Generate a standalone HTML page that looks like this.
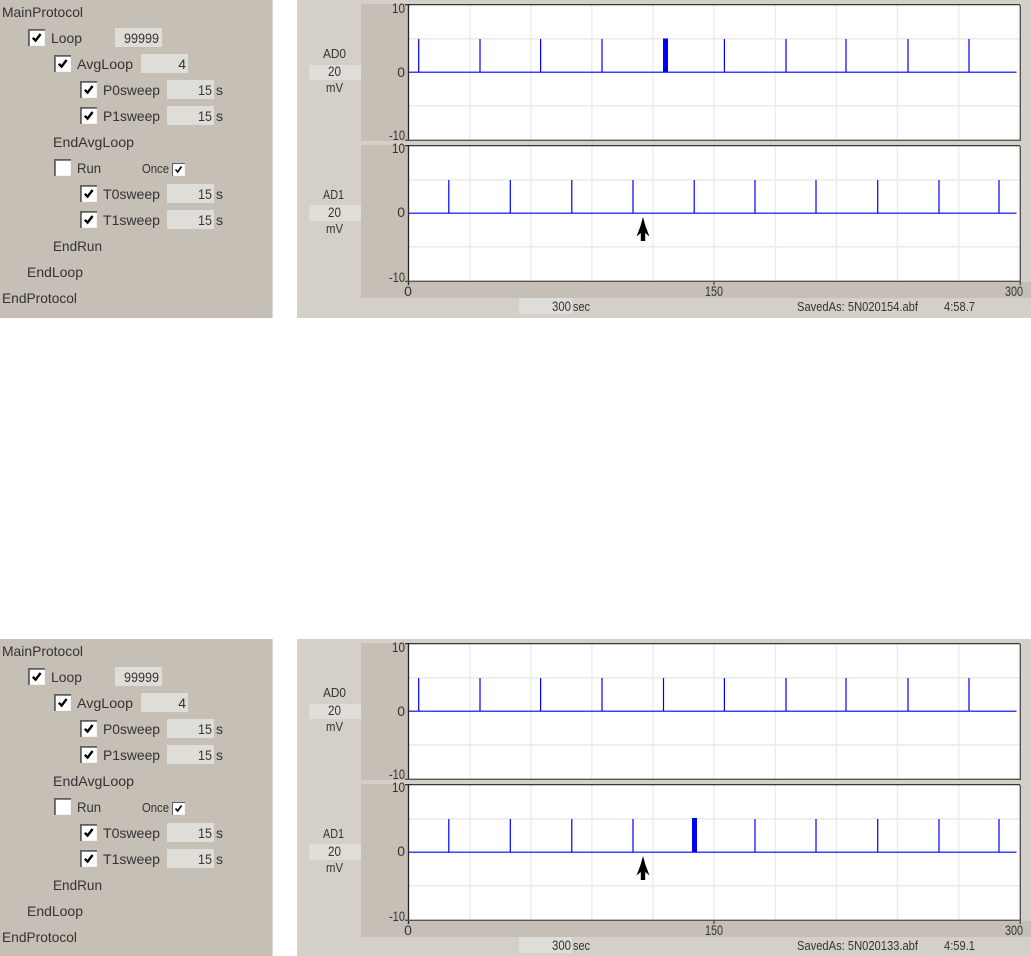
<!DOCTYPE html>
<html><head><meta charset="utf-8"><title>Protocol</title>
<style>
html,body{margin:0;padding:0;background:#fff;width:1031px;height:956px;overflow:hidden}
svg{display:block;position:absolute;left:0;top:0}
text{font-family:"Liberation Sans",sans-serif;font-size:14px;fill:#333}
.s{font-size:12.5px}
.d{font-size:14px}
.m{text-anchor:middle}
.e{text-anchor:end}
.g{fill:#ebebe9}
.b{fill:none;stroke:#00f;stroke-width:1.2}
</style></head><body>
<svg width="1031" height="956" viewBox="0 0 1031 956" xmlns="http://www.w3.org/2000/svg">
<defs>
<g id="cb"><rect x="0" y="0" width="17" height="17" fill="#f4f3f0"/><path d="M.9 17V.9H17" fill="none" stroke="#5f5f5f" stroke-width="1.8"/><rect x="2" y="2" width="14" height="14" fill="#fff"/><path d="M4.8 8.8L7.6 11.6L12.6 5" fill="none" stroke="#000" stroke-width="2.4"/></g>
<g id="cbe"><rect x="0" y="0" width="17" height="17" fill="#f4f3f0"/><path d="M.9 17V.9H17" fill="none" stroke="#5f5f5f" stroke-width="1.8"/><rect x="2" y="2" width="14" height="14" fill="#fff"/></g>
<g id="shell">
<rect x="0" y="0" width="272" height="318" fill="#c5bfb5"/>
<rect x="272" y="0" width="1" height="318" fill="#dcd9d2"/>
<rect x="297" y="0" width="734" height="318" fill="#d4d0c8"/>
<rect x="115" y="28" width="47" height="19" fill="#dfddd7"/>
<rect x="141" y="54" width="47" height="19" fill="#dfddd7"/>
<rect x="167" y="80" width="47" height="19" fill="#dfddd7"/>
<rect x="167" y="106" width="47" height="19" fill="#dfddd7"/>
<rect x="167" y="184" width="47" height="19" fill="#dfddd7"/>
<rect x="167" y="210" width="47" height="19" fill="#dfddd7"/>
<use href="#cb" x="28" y="29"/><use href="#cb" x="54" y="55"/><use href="#cb" x="80" y="81"/><use href="#cb" x="80" y="107"/>
<use href="#cbe" x="54" y="159"/><use href="#cb" x="80" y="185"/><use href="#cb" x="80" y="211"/>
<rect x="172" y="163" width="13" height="13" fill="#f4f3f0"/><path d="M172.5 176V163.5H185" fill="none" stroke="#5f5f5f"/><rect x="173.5" y="164.5" width="10.5" height="10.5" fill="#fff"/><path d="M175.5 169.5L177.7 172L181.5 166.5" fill="none" stroke="#000" stroke-width="1.6"/>
<rect x="361" y="4" width="47" height="137" fill="#c5bfb5"/>
<rect x="361" y="145" width="47" height="153" fill="#c5bfb5"/>
<rect x="408" y="282" width="623" height="16" fill="#c5bfb5"/>
<rect x="309" y="65" width="52" height="15" fill="#dfddd7"/>
<rect x="309" y="205" width="52" height="16" fill="#dfddd7"/>
<rect x="519" y="298" width="53" height="16" fill="#dfddd7"/>
<rect x="408" y="5" width="612" height="135" fill="#fff"/>
<rect x="408" y="146" width="612" height="135" fill="#fff"/>
<g class="g">
<rect x="408" y="38" width="612" height="1.6"/><rect x="408" y="105" width="612" height="1.6"/>
<rect x="408" y="179" width="612" height="1.6"/><rect x="408" y="246" width="612" height="1.6"/>
<rect x="469.2" y="5" width="1.4" height="135"/><rect x="530.2" y="5" width="1.4" height="135"/><rect x="591.2" y="5" width="1.4" height="135"/><rect x="652.2" y="5" width="1.4" height="135"/><rect x="713.2" y="5" width="1.4" height="135"/><rect x="774.7" y="5" width="1.4" height="135"/><rect x="835.7" y="5" width="1.4" height="135"/><rect x="896.7" y="5" width="1.4" height="135"/><rect x="958" y="5" width="1.4" height="135"/>
<rect x="469.2" y="146" width="1.4" height="135"/><rect x="530.2" y="146" width="1.4" height="135"/><rect x="591.2" y="146" width="1.4" height="135"/><rect x="652.2" y="146" width="1.4" height="135"/><rect x="713.2" y="146" width="1.4" height="135"/><rect x="774.7" y="146" width="1.4" height="135"/><rect x="835.7" y="146" width="1.4" height="135"/><rect x="896.7" y="146" width="1.4" height="135"/><rect x="958" y="146" width="1.4" height="135"/>
</g>
<path class="b" d="M408 72.2H1016.5M418.7 39V72M480 39V72M540.6 39V72M602 39V72M724.4 39V72M786 39V72M846 39V72M908 39V72M969 39V72"/>
<path class="b" d="M408 213.2H1016.5M448.8 180V213M510.3 180V213M571.8 180V213M633 180V213M755 180V213M816 180V213M877.7 180V213M939 180V213M999 180V213"/>
<path d="M405 4.7H1020" stroke="#222" stroke-width="1.2" fill="none"/>
<path d="M405 145.7H1020" stroke="#222" stroke-width="1.2" fill="none"/>
<path d="M408.5 4V140M408.5 145V281V285" stroke="#222" stroke-width="1.3" fill="none"/>
<path d="M405 140.3H1021M1020.3 5V141" stroke="#555" stroke-width="1.4" fill="none"/>
<path d="M405 281.3H1021M1020.3 146V285M714 281V285" stroke="#555" stroke-width="1.4" fill="none"/>
<path d="M643 217L640.5 226L636.5 236.5L640.8 233V241H645.2V233L649.5 236.5L645.5 226Z" fill="#000"/>
</g>
</defs>

<use href="#shell"/>
<use href="#shell" y="639"/>
<rect x="663" y="38.5" width="5" height="34" fill="#00f"/>
<rect x="692" y="818" width="5" height="34" fill="#00f"/>
<path class="b" d="M663.5 678V711"/>
<path class="b" d="M694.2 180V213"/>

<g>
<text x="2" y="17" textLength="81" lengthAdjust="spacingAndGlyphs">MainProtocol</text>
<text x="51" y="43" textLength="31" lengthAdjust="spacingAndGlyphs">Loop</text>
<text x="124" y="43" class="d" textLength="35" lengthAdjust="spacingAndGlyphs">99999</text>
<text x="77" y="69" textLength="56" lengthAdjust="spacingAndGlyphs">AvgLoop</text>
<text x="186" y="69" class="e d">4</text>
<text x="103" y="95" textLength="57" lengthAdjust="spacingAndGlyphs">P0sweep</text>
<text x="198" y="95" class="d" textLength="14" lengthAdjust="spacingAndGlyphs">15</text><text x="216" y="95" class="d">s</text>
<text x="103" y="121" textLength="57" lengthAdjust="spacingAndGlyphs">P1sweep</text>
<text x="198" y="121" class="d" textLength="14" lengthAdjust="spacingAndGlyphs">15</text><text x="216" y="121" class="d">s</text>
<text x="53" y="147" textLength="81" lengthAdjust="spacingAndGlyphs">EndAvgLoop</text>
<text x="77" y="173" textLength="24" lengthAdjust="spacingAndGlyphs">Run</text>
<text x="142" y="173" class="s" textLength="27" lengthAdjust="spacingAndGlyphs">Once</text>
<text x="103" y="199" textLength="57" lengthAdjust="spacingAndGlyphs">T0sweep</text>
<text x="198" y="199" class="d" textLength="14" lengthAdjust="spacingAndGlyphs">15</text><text x="216" y="199" class="d">s</text>
<text x="103" y="225" textLength="57" lengthAdjust="spacingAndGlyphs">T1sweep</text>
<text x="198" y="225" class="d" textLength="14" lengthAdjust="spacingAndGlyphs">15</text><text x="216" y="225" class="d">s</text>
<text x="53" y="251" textLength="49" lengthAdjust="spacingAndGlyphs">EndRun</text>
<text x="27" y="277" textLength="56" lengthAdjust="spacingAndGlyphs">EndLoop</text>
<text x="2" y="303" textLength="75" lengthAdjust="spacingAndGlyphs">EndProtocol</text>
<text x="323" y="58" class="s" textLength="23" lengthAdjust="spacingAndGlyphs">AD0</text>
<text x="328" y="76" class="d" textLength="13" lengthAdjust="spacingAndGlyphs">20</text>
<text x="326" y="92" class="s" textLength="17" lengthAdjust="spacingAndGlyphs">mV</text>
<text x="323" y="199" class="s" textLength="21" lengthAdjust="spacingAndGlyphs">AD1</text>
<text x="328" y="217" class="d" textLength="13" lengthAdjust="spacingAndGlyphs">20</text>
<text x="326" y="233" class="s" textLength="17" lengthAdjust="spacingAndGlyphs">mV</text>
<text x="392" y="13" class="d" textLength="13" lengthAdjust="spacingAndGlyphs">10</text><text x="405" y="77" class="e d">0</text><text x="389" y="140" class="d" textLength="16" lengthAdjust="spacingAndGlyphs">-10</text>
<text x="392" y="153" class="d" textLength="13" lengthAdjust="spacingAndGlyphs">10</text><text x="405" y="217" class="e d">0</text><text x="389" y="282" class="d" textLength="16" lengthAdjust="spacingAndGlyphs">-10</text>
<text x="408" y="296" class="m d">0</text><text x="705" y="296" class="d" textLength="18" lengthAdjust="spacingAndGlyphs">150</text><text x="1005" y="296" class="d" textLength="18" lengthAdjust="spacingAndGlyphs">300</text>
<text x="552" y="311" class="d" textLength="19" lengthAdjust="spacingAndGlyphs">300</text><text x="573" y="311" class="s" textLength="17" lengthAdjust="spacingAndGlyphs">sec</text>
<text x="797" y="311" class="s" textLength="121" lengthAdjust="spacingAndGlyphs">SavedAs: 5N020154.abf</text>
<text x="944" y="311" class="s" textLength="31" lengthAdjust="spacingAndGlyphs">4:58.7</text>
</g>

<g transform="translate(0,639)">
<text x="2" y="17" textLength="81" lengthAdjust="spacingAndGlyphs">MainProtocol</text>
<text x="51" y="43" textLength="31" lengthAdjust="spacingAndGlyphs">Loop</text>
<text x="124" y="43" class="d" textLength="35" lengthAdjust="spacingAndGlyphs">99999</text>
<text x="77" y="69" textLength="56" lengthAdjust="spacingAndGlyphs">AvgLoop</text>
<text x="186" y="69" class="e d">4</text>
<text x="103" y="95" textLength="57" lengthAdjust="spacingAndGlyphs">P0sweep</text>
<text x="198" y="95" class="d" textLength="14" lengthAdjust="spacingAndGlyphs">15</text><text x="216" y="95" class="d">s</text>
<text x="103" y="121" textLength="57" lengthAdjust="spacingAndGlyphs">P1sweep</text>
<text x="198" y="121" class="d" textLength="14" lengthAdjust="spacingAndGlyphs">15</text><text x="216" y="121" class="d">s</text>
<text x="53" y="147" textLength="81" lengthAdjust="spacingAndGlyphs">EndAvgLoop</text>
<text x="77" y="173" textLength="24" lengthAdjust="spacingAndGlyphs">Run</text>
<text x="142" y="173" class="s" textLength="27" lengthAdjust="spacingAndGlyphs">Once</text>
<text x="103" y="199" textLength="57" lengthAdjust="spacingAndGlyphs">T0sweep</text>
<text x="198" y="199" class="d" textLength="14" lengthAdjust="spacingAndGlyphs">15</text><text x="216" y="199" class="d">s</text>
<text x="103" y="225" textLength="57" lengthAdjust="spacingAndGlyphs">T1sweep</text>
<text x="198" y="225" class="d" textLength="14" lengthAdjust="spacingAndGlyphs">15</text><text x="216" y="225" class="d">s</text>
<text x="53" y="251" textLength="49" lengthAdjust="spacingAndGlyphs">EndRun</text>
<text x="27" y="277" textLength="56" lengthAdjust="spacingAndGlyphs">EndLoop</text>
<text x="2" y="303" textLength="75" lengthAdjust="spacingAndGlyphs">EndProtocol</text>
<text x="323" y="58" class="s" textLength="23" lengthAdjust="spacingAndGlyphs">AD0</text>
<text x="328" y="76" class="d" textLength="13" lengthAdjust="spacingAndGlyphs">20</text>
<text x="326" y="92" class="s" textLength="17" lengthAdjust="spacingAndGlyphs">mV</text>
<text x="323" y="199" class="s" textLength="21" lengthAdjust="spacingAndGlyphs">AD1</text>
<text x="328" y="217" class="d" textLength="13" lengthAdjust="spacingAndGlyphs">20</text>
<text x="326" y="233" class="s" textLength="17" lengthAdjust="spacingAndGlyphs">mV</text>
<text x="392" y="13" class="d" textLength="13" lengthAdjust="spacingAndGlyphs">10</text><text x="405" y="77" class="e d">0</text><text x="389" y="140" class="d" textLength="16" lengthAdjust="spacingAndGlyphs">-10</text>
<text x="392" y="153" class="d" textLength="13" lengthAdjust="spacingAndGlyphs">10</text><text x="405" y="217" class="e d">0</text><text x="389" y="282" class="d" textLength="16" lengthAdjust="spacingAndGlyphs">-10</text>
<text x="408" y="296" class="m d">0</text><text x="705" y="296" class="d" textLength="18" lengthAdjust="spacingAndGlyphs">150</text><text x="1005" y="296" class="d" textLength="18" lengthAdjust="spacingAndGlyphs">300</text>
<text x="552" y="311" class="d" textLength="19" lengthAdjust="spacingAndGlyphs">300</text><text x="573" y="311" class="s" textLength="17" lengthAdjust="spacingAndGlyphs">sec</text>
<text x="797" y="311" class="s" textLength="121" lengthAdjust="spacingAndGlyphs">SavedAs: 5N020133.abf</text>
<text x="944" y="311" class="s" textLength="31" lengthAdjust="spacingAndGlyphs">4:59.1</text>
</g>
</svg>
</body></html>
